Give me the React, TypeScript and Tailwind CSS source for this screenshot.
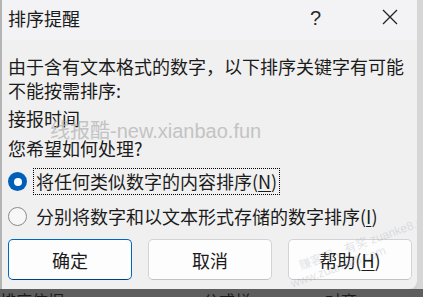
import React from "react";

export default function App() {
  return (
    <div className="w-[423px] h-[297px] overflow-hidden flex flex-col bg-[#d2d2d2] font-['Noto_Sans_CJK_SC','Noto_Sans',sans-serif] text-[#1b1b1b]">
      <div className="flex h-[289px]">
        <div className="relative w-[417px] h-[289px] bg-[#f0f0f0] border-l-2 border-[#b4b4b4] rounded-br-[8px] flex flex-col overflow-hidden">
          {/* title bar */}
          <div className="h-[40px] bg-[#f3f3f5] flex items-center pl-[6px] shrink-0">
            <div className="text-[18px] leading-[24px] flex-1 -mt-[4px]">排序提醒</div>
            <div className="w-[14px] text-[20px] leading-[22px] text-[#2a2a2a] mr-[58px] -mt-[5px] font-['Liberation_Sans',sans-serif]">?</div>
            <svg width="16" height="16" viewBox="0 0 16 16" className="mr-[19px] -mt-[6px]">
              <path d="M1 1 L15 15 M15 1 L1 15" stroke="#222" strokeWidth="1.3" fill="none" />
            </svg>
          </div>
          {/* body */}
          <div className="relative pl-[6px] pt-[14px] flex flex-col">
            <div className="text-[18px] leading-[24px]">
              由于含有文本格式的数字，以下排序关键字有可能
              <br />
              不能按需排序:
            </div>
            <div className="text-[18px] leading-[24px] mt-[4px]">接报时间</div>
            <div className="text-[18px] leading-[24px] mt-[6px]">您希望如何处理?</div>
            <div className="flex items-center mt-[8px] h-[27px]">
              <div className="w-[19px] h-[19px] rounded-full bg-[#005fb8] flex items-center justify-center shrink-0">
                <div className="w-[8px] h-[8px] rounded-full bg-white" />
              </div>
              <span className="ml-[6px] border border-dotted border-black px-[2px] text-[18px] leading-[25px] whitespace-nowrap">
                将任何类似数字的内容排序(<span className="underline underline-offset-2">N</span>)
              </span>
            </div>
            <div className="flex items-center mt-[8px] h-[27px]">
              <div className="w-[19px] h-[19px] rounded-full border border-[#8a8a8a] bg-[#f7f7f7] shrink-0" />
              <span className="ml-[6px] border border-transparent px-[2px] text-[18px] leading-[25px] whitespace-nowrap">
                分别将数字和以文本形式存储的数字排序(<span className="underline underline-offset-2">I</span>)
              </span>
            </div>
            <div className="flex gap-[16px] mt-[9px]">
              <button className="w-[124px] h-[41px] rounded-[5px] bg-[#fdfdfd] border border-[#0067c0] border-b-[#003e92] text-[18px] leading-[24px]">
                确定
              </button>
              <button className="w-[124px] h-[41px] rounded-[5px] bg-[#fdfdfd] border border-[#d3d3d3] border-b-[#c2c2c2] text-[18px] leading-[24px]">
                取消
              </button>
              <button className="w-[124px] h-[41px] rounded-[5px] bg-[#fdfdfd] border border-[#d3d3d3] border-b-[#c2c2c2] text-[18px] leading-[24px]">
                帮助(<span className="underline underline-offset-2">H</span>)
              </button>
            </div>
          </div>
          {/* watermarks (overlay) */}
          <div className="absolute left-[282px] top-[236px] -rotate-[20deg] text-[12px] leading-[14px] text-[#8e98a8] opacity-25 font-['Liberation_Sans','Noto_Sans_CJK_SC',sans-serif] whitespace-nowrap pointer-events-none">
            <div className="pl-[14px]">赚客吧，有奖 zuanke8.com</div>
            <div>www.zuanke8.com</div>
          </div>
          <div className="absolute left-[48px] top-[119px] text-[20px] leading-[24px] text-[#b9b9b9] opacity-80 font-['Liberation_Sans','Noto_Sans_CJK_SC',sans-serif] whitespace-nowrap pointer-events-none">
            线报酷-new.xianbao.fun
          </div>
        </div>
        <div className="flex-1 bg-[#d6d6d6]" />
      </div>
      <div className="h-[8px] bg-[#5e5e5e] overflow-hidden relative">
        <div className="flex text-[16px] leading-[16px] text-[#1a1a1a] pt-[3px]">
          <span className="w-[203px]">排序依据</span>
          <span className="w-[122px]">公式栏</span>
          <span>对齐</span>
        </div>
      </div>
    </div>
  );
}
